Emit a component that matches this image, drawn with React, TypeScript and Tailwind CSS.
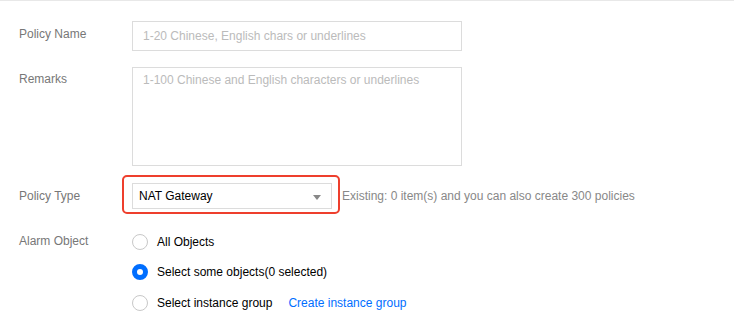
export default function App() {
  const font = { fontFamily: '"Liberation Sans", Arial, sans-serif' };

  return (
    <div
      className="w-[734px] h-[316px] overflow-hidden bg-white border-t border-[#e8e8e8] text-[12px] leading-[18px]"
      style={font}
    >
      <div className="pl-[19px] pt-[20px]">
        {/* Policy Name */}
        <div className="flex items-start">
          <div className="w-[113px] pt-[4px] text-[#777]">Policy Name</div>
          <div className="w-[330px] h-[30px] border border-[#dcdcdc] px-[10px] flex items-center text-[#bbb]">
            1-20 Chinese, English chars or underlines
          </div>
        </div>

        {/* Remarks */}
        <div className="flex items-start mt-[16px]">
          <div className="w-[113px] pt-[3px] text-[#777]">Remarks</div>
          <div className="w-[330px] h-[99px] border border-[#dcdcdc] px-[10px] pt-[3px] text-[#bbb]">
            1-100 Chinese and English characters or underlines
          </div>
        </div>

        {/* Policy Type */}
        <div className="flex items-center mt-[17px]">
          <div className="w-[113px] text-[#777]">Policy Type</div>
          <div className="relative w-[200px] h-[26px] border border-[#dcdcdc] pl-[6px] pr-[10px] flex items-center justify-between text-black">
            <span>NAT Gateway</span>
            <svg width="8" height="5" viewBox="0 0 8 5" className="mt-[2px]">
              <path d="M0 0 L8 0 L4 5 Z" fill="#888" />
            </svg>
            <div className="absolute left-[-11px] top-[-9px] right-[-9px] bottom-[-6px] border-2 border-[#ee3f2d] rounded-[5px]" />
          </div>
          <div className="ml-[10px] text-[#888]">Existing: 0 item(s) and you can also create 300 policies</div>
        </div>

        {/* Alarm Object */}
        <div className="flex items-start mt-[17px]">
          <div className="w-[113px] h-[30px] flex items-center text-[#777]">Alarm Object</div>
          <div className="flex flex-col">
            <div className="h-[31px] flex items-center">
              <span className="w-[16px] h-[16px] rounded-full border border-[#c8c8c8] bg-white" />
              <span className="ml-[9px] text-black">All Objects</span>
            </div>
            <div className="h-[30px] flex items-center">
              <span className="w-[16px] h-[16px] rounded-full border-[5px] border-[#006eff] bg-white" />
              <span className="ml-[9px] text-black">Select some objects(0 selected)</span>
            </div>
            <div className="h-[31px] flex items-center">
              <span className="w-[16px] h-[16px] rounded-full border border-[#c8c8c8] bg-white" />
              <span className="ml-[9px] text-black">Select instance group</span>
              <span className="ml-[16px] text-[#006eff]">Create instance group</span>
            </div>
          </div>
        </div>
      </div>
    </div>
  );
}
